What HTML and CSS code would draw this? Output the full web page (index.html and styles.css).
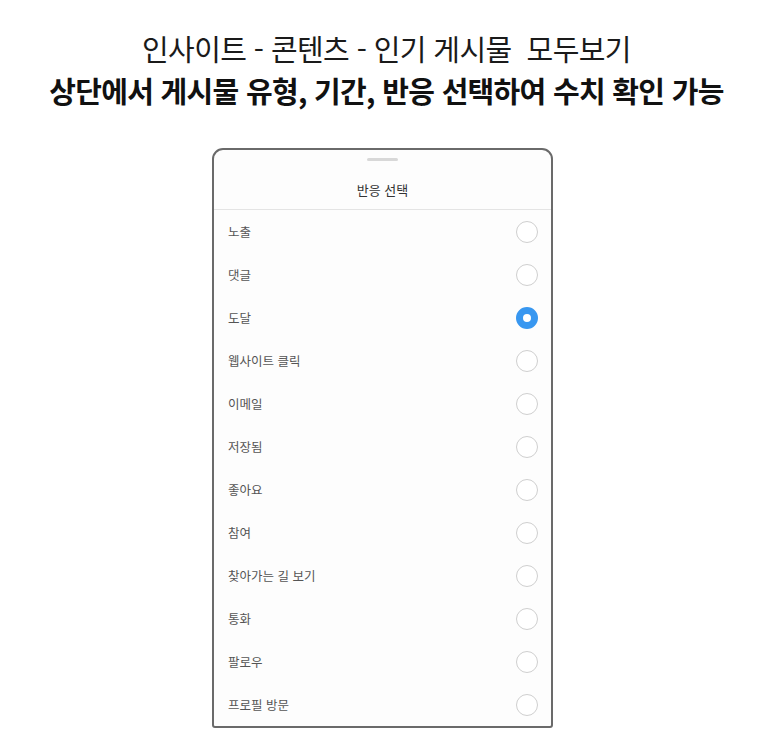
FILE: index.html
```html
<!DOCTYPE html>
<html lang="ko">
<head>
<meta charset="utf-8">
<link rel="stylesheet" href="styles.css">
</head>
<body>
<div class="page">
  <header class="heading">
    <h1 class="line1">인사이트 - 콘텐츠 - 인기 게시물&nbsp; 모두보기</h1>
    <h2 class="line2">상단에서 게시물 유형, 기간, 반응 선택하여 수치 확인 가능</h2>
  </header>
  <div class="phone">
    <div class="handle"></div>
    <div class="sheet-title">반응 선택</div>
    <ul class="options">
      <li class="option"><span>노출</span><span class="radio"></span></li>
      <li class="option"><span>댓글</span><span class="radio"></span></li>
      <li class="option"><span>도달</span><span class="radio checked"></span></li>
      <li class="option"><span>웹사이트 클릭</span><span class="radio"></span></li>
      <li class="option"><span>이메일</span><span class="radio"></span></li>
      <li class="option"><span>저장됨</span><span class="radio"></span></li>
      <li class="option"><span>좋아요</span><span class="radio"></span></li>
      <li class="option"><span>참여</span><span class="radio"></span></li>
      <li class="option"><span>찾아가는 길 보기</span><span class="radio"></span></li>
      <li class="option"><span>통화</span><span class="radio"></span></li>
      <li class="option"><span>팔로우</span><span class="radio"></span></li>
      <li class="option"><span>프로필 방문</span><span class="radio"></span></li>
    </ul>
  </div>
</div>
</body>
</html>
```
FILE: styles.css
```css
* { box-sizing: border-box; }
html, body {
  margin: 0;
  padding: 0;
  background: #ffffff;
}
body {
  font-family: "Noto Sans CJK KR", "Noto Sans", sans-serif;
  color: #111;
}
.page {
  width: 773px;
  height: 737px;
  overflow: hidden;
  display: flex;
  flex-direction: column;
  align-items: center;
  padding-top: 29px;
}
.heading {
  text-align: center;
}
.line1 {
  margin: 0;
  font-size: 29px;
  font-weight: 400;
  line-height: 38px;
  letter-spacing: -0.6px;
  color: #1a1a1a;
  white-space: nowrap;
}
.line2 {
  margin: 4px 0 0;
  font-size: 29px;
  font-weight: 700;
  line-height: 38px;
  letter-spacing: -0.7px;
  color: #111;
  white-space: nowrap;
}
.phone {
  margin-top: 39px;
  margin-right: 8px;
  width: 341px;
  height: 580px;
  border: 2px solid #6a6a6a;
  border-radius: 11px 11px 3px 3px;
  background: #fdfdfd;
  display: flex;
  flex-direction: column;
  align-items: stretch;
}
.handle {
  align-self: center;
  width: 31px;
  height: 3px;
  border-radius: 2px;
  background: #d8d8d8;
  margin-top: 8px;
}
.sheet-title {
  text-align: center;
  font-size: 13px;
  color: #333;
  height: 49px;
  padding-top: 10px;
  line-height: 38px;
  border-bottom: 1px solid #e4e4e4;
}
.options {
  list-style: none;
  margin: 0;
  padding: 0;
}
.option {
  height: 43px;
  display: flex;
  align-items: center;
  justify-content: space-between;
  padding: 0 13px 0 14px;
  font-size: 12.5px;
  color: #555;
}
.radio {
  width: 22px;
  height: 22px;
  border-radius: 50%;
  border: 1.5px solid #cfcfcf;
  background: #fff;
}
.radio.checked {
  border: 7px solid #3897f0;
  background: #fff;
}
```
